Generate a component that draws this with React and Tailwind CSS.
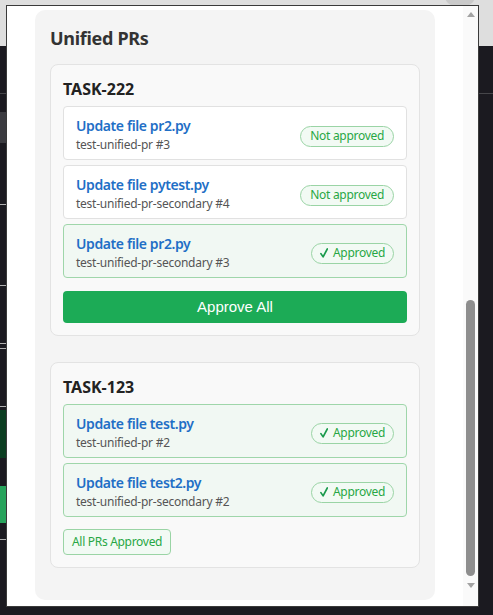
import React from "react";

const F = { fontFamily: '"Noto Sans", "Open Sans", sans-serif' };

function Check() {
  return (
    <svg width="8" height="10" viewBox="0 0 8 10" className="mr-[5px] shrink-0">
      <path d="M0.9 5.6 L3.1 8.9 L7.3 0.9" fill="none" stroke="#1a9a4c" strokeWidth="1.7" strokeLinecap="round" strokeLinejoin="round" />
    </svg>
  );
}

function Badge({ approved }) {
  return (
    <span className="inline-flex h-[21px] items-center rounded-full border border-[#9ad4a5] bg-[#f2faf4] px-[8px] text-[12px] leading-none tracking-[-0.3px] text-[#28a745]">
      {approved ? (
        <>
          <Check />
          Approved
        </>
      ) : (
        <span className="px-[1px]">Not approved</span>
      )}
    </span>
  );
}

function PRItem({ title, sub, approved }) {
  return (
    <div
      className={
        "flex h-[54px] items-start justify-between rounded-[4px] border pl-[12px] pr-[12px] pt-[9px] " +
        (approved ? "border-[#9fd6aa] bg-[#f1f8f3]" : "border-[#e1e1e1] bg-white")
      }
    >
      <div className="flex flex-col">
        <span className="text-[14px] font-semibold leading-[19px] tracking-[-0.4px] text-[#1f6fc6]">{title}</span>
        <span className="mt-[1px] text-[12px] leading-[18px] tracking-[-0.25px] text-[#555]">{sub}</span>
      </div>
      <div className="mt-[6px]">
        <Badge approved={approved} />
      </div>
    </div>
  );
}

function Card({ task, children }) {
  return (
    <div className="rounded-[8px] border border-[#e3e3e3] bg-[#f9f9f9] px-[12px] pb-[12px] pt-[12px]">
      <h3 className="mb-[5px] text-[16px] font-bold leading-[24px] text-[#222]">{task}</h3>
      {children}
    </div>
  );
}

export default function App() {
  return (
    <div className="relative h-[615px] w-[493px] overflow-hidden bg-[#1b1a20]" style={F}>
      {/* background scene */}
      <div className="absolute left-0 top-0 h-[46px] w-full bg-[#dedede]" />
      <div className="absolute left-[445px] top-[-14px] h-[20px] w-[30px] rounded-full bg-[#c9c9c9]" />
      <div className="absolute left-0 top-[93px] h-px w-full bg-[#46464a]" />
      <div className="absolute left-0 top-[112px] h-[31px] w-[7px] bg-[#3b3b40]" />
      <div className="absolute left-0 top-[204px] h-px w-[7px] bg-[#b0b0b0]" />
      <div className="absolute left-0 top-[285px] h-px w-[7px] bg-[#b0b0b0]" />
      <div className="absolute left-0 top-[343px] h-px w-[7px] bg-[#b0b0b0]" />
      <div className="absolute left-0 top-[348px] h-px w-[7px] bg-[#b0b0b0]" />
      <div className="absolute left-0 top-[406px] h-px w-[7px] bg-[#b0b0b0]" />
      <div className="absolute left-0 top-[410px] h-[48px] w-[7px] bg-[#0b3d21]" />
      <div className="absolute left-0 top-[486px] h-[37px] w-[7px] bg-[#27a35c]" />
      <div className="absolute left-0 top-[539px] h-px w-[7px] bg-[#b0b0b0]" />

      {/* popup */}
      <div className="absolute left-[6px] top-[5px] flex h-[602px] w-[473px] border border-[#3a3a3a] bg-white">
        <div className="flex flex-1 justify-center pt-[4px]">
          <div className="h-[590px] w-[400px] rounded-[10px] bg-[#f4f4f4] px-[15px] pt-[16px]">
            <h2 className="mb-[14px] text-[18px] font-bold leading-[24px] tracking-[-0.3px] text-[#333]">Unified PRs</h2>
            <Card task="TASK-222">
              <div className="flex flex-col gap-[5px]">
                <PRItem title="Update file pr2.py" sub="test-unified-pr #3" />
                <PRItem title="Update file pytest.py" sub="test-unified-pr-secondary #4" />
                <PRItem title="Update file pr2.py" sub="test-unified-pr-secondary #3" approved />
              </div>
              <button
                className="mt-[13px] flex h-[32px] w-full items-center justify-center rounded-[4px] bg-[#1cab56] text-[15px] text-white"
                style={{ fontFamily: '"Liberation Sans", Arial, sans-serif' }}
              >
                Approve All
              </button>
            </Card>
            <div className="h-[26px]" />
            <Card task="TASK-123">
              <div className="flex flex-col gap-[5px]">
                <PRItem title="Update file test.py" sub="test-unified-pr #2" approved />
                <PRItem title="Update file test2.py" sub="test-unified-pr-secondary #2" approved />
              </div>
              <div className="mt-[12px] flex">
                <span className="inline-flex h-[26px] items-center rounded-[4px] border border-[#9ad4a5] bg-[#f2faf4] px-[8px] text-[12px] tracking-[-0.3px] text-[#28a745]">
                  All PRs Approved
                </span>
              </div>
            </Card>
          </div>
        </div>
        {/* scrollbar */}
        <div className="relative flex w-[15px] flex-col items-center bg-[#fafafa]">
          <div className="mt-[6px] h-0 w-0 border-x-[4px] border-b-[5px] border-x-transparent border-b-[#a3a3a3]" />
          <div className="mt-[283px] h-[276px] w-[9px] rounded-full bg-[#8e8e8e]" />
          <div className="mt-[7px] h-0 w-0 border-x-[4px] border-t-[5px] border-x-transparent border-t-[#a3a3a3]" />
        </div>
      </div>
    </div>
  );
}
